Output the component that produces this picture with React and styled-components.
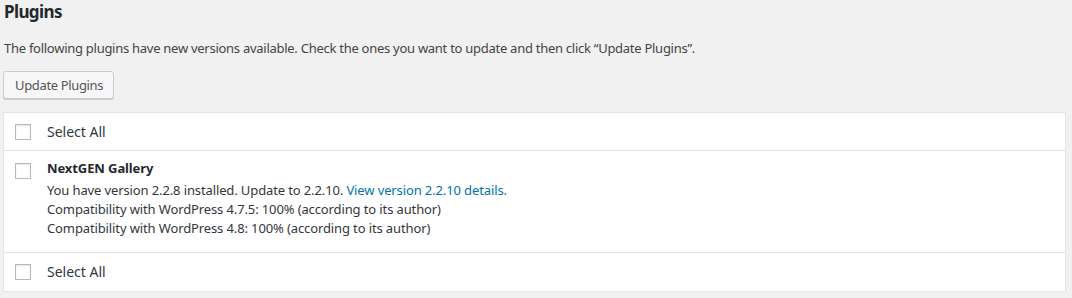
import React from "react";
import styled, { createGlobalStyle } from "styled-components";

const Global = createGlobalStyle`
  html, body { margin: 0; padding: 0; background: #f1f1f1; }
  body {
    font-family: "Noto Sans", "Open Sans", sans-serif;
    font-size: 13px;
    line-height: 1.4;
    color: #444;
  }
  * { box-sizing: border-box; }
`;

const Page = styled.div`
  padding: 0 6px 0 3px;
`;

const Heading = styled.h2`
  margin: 0;
  padding-left: 1px;
  font-size: 17px;
  line-height: 23px;
  font-weight: 700;
  letter-spacing: -0.6px;
  color: #23282d;
`;

const Intro = styled.p`
  margin: 15px 0 0;
  padding-left: 1px;
  font-size: 13px;
  line-height: 20px;
  letter-spacing: -0.27px;
`;

const Button = styled.button`
  margin-top: 13px;
  display: inline-block;
  height: 28px;
  padding: 0 10px 1px 11px;
  font-family: inherit;
  font-size: 13px;
  line-height: 26px;
  letter-spacing: -0.35px;
  color: #555;
  background: #f7f7f7;
  border: 1px solid #ccc;
  border-radius: 3px;
  box-shadow: 0 1px 0 #ccc;
  cursor: pointer;
`;

const Table = styled.div`
  margin-top: 13px;
  background: #fff;
  border: 1px solid #e5e5e5;
  box-shadow: 0 1px 1px rgba(0, 0, 0, 0.04);
`;

const Row = styled.div`
  display: grid;
  grid-template-columns: 43px 1fr;
  align-items: start;
  padding: ${(p) => (p.$tall ? "7px 0 14px" : "8px 0")};
  & + & {
    border-top: 1px solid #e1e1e1;
  }
  &:last-child {
    padding-bottom: 9px;
  }
`;

const Box = styled.span`
  display: block;
  width: 16px;
  height: 16px;
  margin: ${(p) => p.$offset || "3px"} 0 0 11px;
  border: 1px solid #b4b9be;
  background: #fff;
  box-shadow: inset 0 1px 2px rgba(0, 0, 0, 0.1);
`;

const Label = styled.span`
  font-size: 14px;
  line-height: 21px;
  color: #32373c;
`;

const Info = styled.div`
  font-size: 13px;
  line-height: 19px;
  letter-spacing: -0.12px;
  color: #32373c;
`;

const Name = styled.strong`
  display: block;
  font-size: 13px;
  line-height: 20px;
  margin-bottom: 3px;
  letter-spacing: -0.1px;
  color: #23282d;
`;

const Link = styled.a`
  color: #0073aa;
  text-decoration: none;
`;

export default function App() {
  return (
    <>
      <Global />
      <Page>
        <Heading>Plugins</Heading>
        <Intro>
          The following plugins have new versions available. Check the ones you want to update and then click
          “Update Plugins”.
        </Intro>
        <Button>Update Plugins</Button>
        <Table>
          <Row>
            <Box />
            <Label>Select All</Label>
          </Row>
          <Row $tall>
            <Box $offset="5px" />
            <Info>
              <Name>NextGEN Gallery</Name>
              You have version 2.2.8 installed. Update to 2.2.10. <Link href="#">View version 2.2.10 details.</Link>
              <br />
              Compatibility with WordPress 4.7.5: 100% (according to its author)
              <br />
              Compatibility with WordPress 4.8: 100% (according to its author)
            </Info>
          </Row>
          <Row>
            <Box />
            <Label>Select All</Label>
          </Row>
        </Table>
      </Page>
    </>
  );
}
